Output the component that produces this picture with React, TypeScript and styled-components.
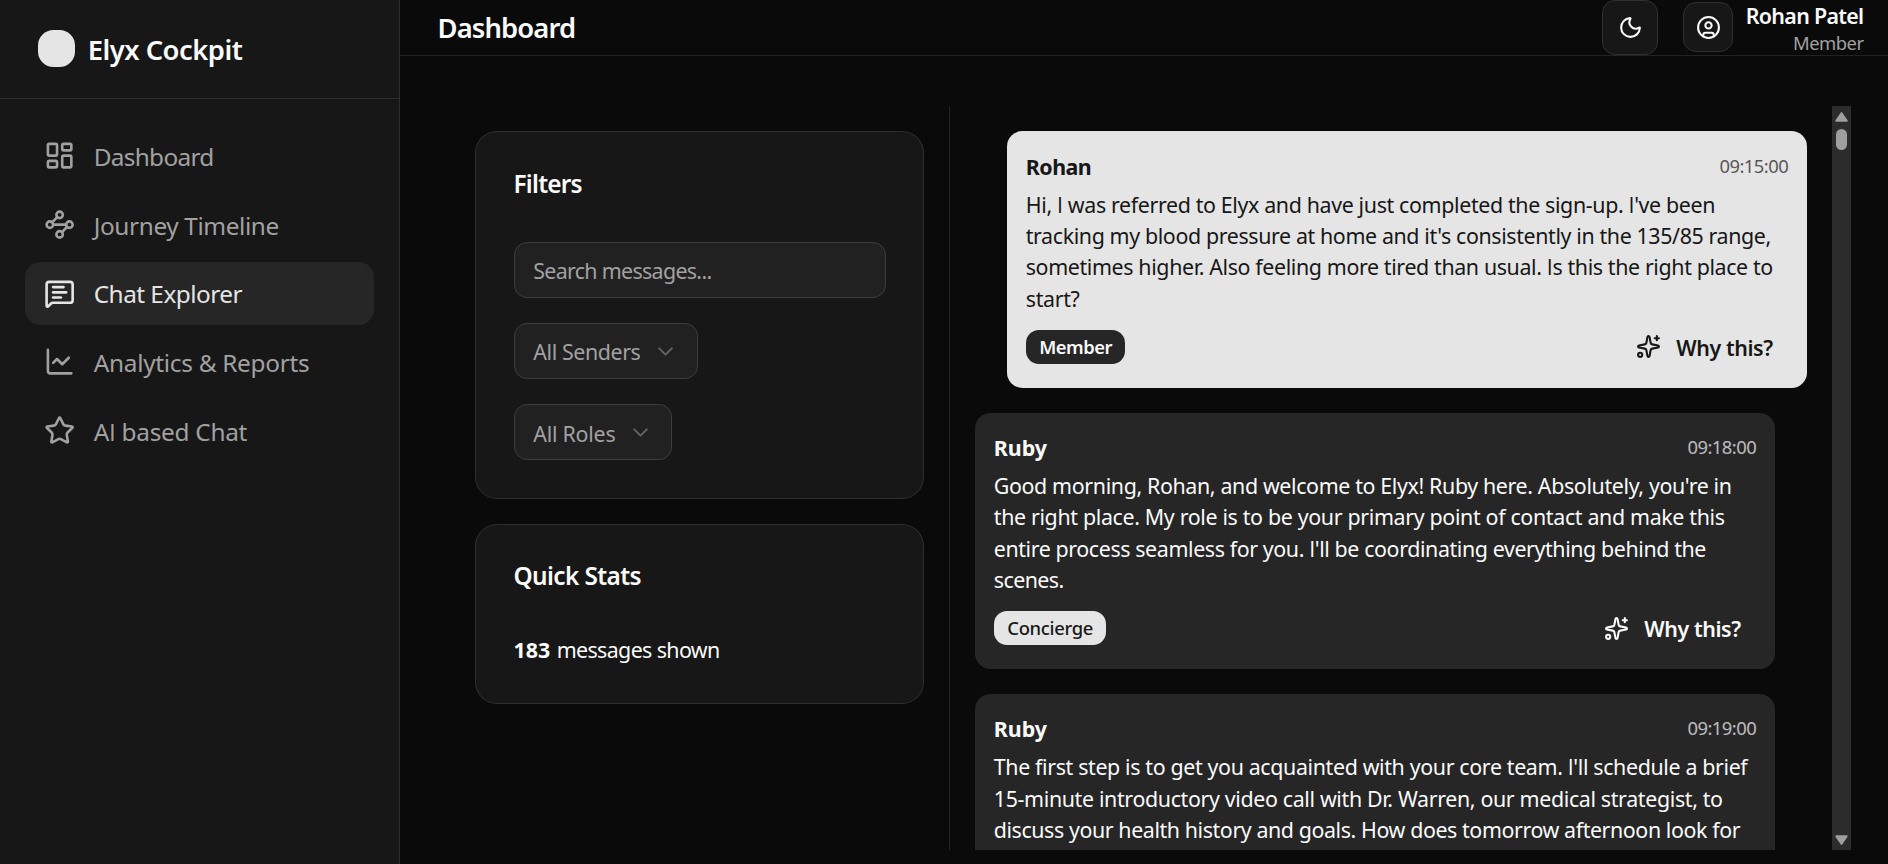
import React from 'react';
import styled, { createGlobalStyle, css } from 'styled-components';
import {
  ChartLine,
  ChevronDown,
  CircleUser,
  LayoutDashboard,
  MessageSquareText,
  Moon,
  Sparkles,
  Star,
  Waypoints,
} from 'lucide-react';

const colors = {
  background: '#0a0a0a',
  card: '#171717',
  accent: '#262626',
  light: '#e5e5e5',
  text: '#fafafa',
  muted: '#a1a1a1',
  border: 'rgba(255, 255, 255, 0.1)',
};

const GlobalStyle = createGlobalStyle`
  *, *::before, *::after { box-sizing: border-box; }
  body {
    margin: 0;
    overflow: hidden;
    background: ${colors.background};
    color: ${colors.text};
    font-family: "Noto Sans", sans-serif;
  }
`;

const Shell = styled.div`
  display: flex;
  width: 100vw;
  height: 100vh;
`;

/* ---------- sidebar ---------- */

const Sidebar = styled.aside`
  flex: 0 0 400px;
  background: ${colors.card};
  border-right: 1px solid ${colors.border};
`;

const Brand = styled.div`
  display: flex;
  align-items: center;
  gap: 12.75px;
  height: 99px;
  padding: 0 38px 1px;
  border-bottom: 1px solid ${colors.border};
`;

const BrandMark = styled.div`
  width: 37px;
  height: 37px;
  border-radius: 15.6px;
  background: ${colors.light};
`;

const Tracked = styled.span<{ $tracking: number }>`
  letter-spacing: ${(p) => p.$tracking}px;
`;

const BrandName = styled(Tracked)`
  padding-top: 2px;
  font-size: 27.4px;
  font-weight: 600;
  line-height: 36px;
`;

const Nav = styled.nav`
  display: flex;
  flex-direction: column;
  gap: 6.25px;
  padding: 25.5px 25px;
`;

const NavItem = styled.a<{ $active?: boolean }>`
  display: flex;
  align-items: center;
  gap: 18.75px;
  height: 62.5px;
  padding: 0 18.75px;
  border-radius: 15.6px;
  font-size: 24.4px;
  color: ${colors.muted};
  white-space: nowrap;
  ${(p) =>
    p.$active &&
    css`
      background: ${colors.accent};
      color: ${colors.light};
    `}
`;

const NavLabel = styled(Tracked)`
  padding-top: 2px;
  line-height: 32px;
`;

/* ---------- header ---------- */

const Main = styled.main`
  flex: 1;
  min-width: 0;
  display: flex;
  flex-direction: column;
`;

const Header = styled.header`
  display: flex;
  align-items: center;
  justify-content: space-between;
  flex: 0 0 56px;
  padding: 0 24.5px 0 37.5px;
  border-bottom: 1px solid ${colors.border};
`;

const PageTitle = styled.h1`
  margin: 0;
  font-size: 27.4px;
  font-weight: 600;
  line-height: 36px;
  letter-spacing: -0.88px;
`;

const HeaderActions = styled.div`
  display: flex;
  align-items: center;
`;

const IconButton = styled.button<{ $w: number; $h: number }>`
  display: flex;
  align-items: center;
  justify-content: center;
  width: ${(p) => p.$w}px;
  height: ${(p) => p.$h}px;
  padding: 0;
  border: 1px solid #303030;
  border-radius: 13px;
  background: ${colors.card};
  color: ${colors.text};
`;

const ProfileButton = styled(IconButton)`
  margin: 0 12.5px 1px 25px;
`;

const Identity = styled.div`
  display: flex;
  flex-direction: column;
  align-items: flex-end;
  height: 51px;
`;

const IdentityName = styled.span`
  font-size: 21.4px;
  font-weight: 600;
  line-height: 27px;
  letter-spacing: -0.68px;
`;

const IdentityRole = styled.span`
  font-size: 18.4px;
  line-height: 28px;
  letter-spacing: -0.5px;
  color: ${colors.muted};
`;

/* ---------- workspace ---------- */

const Workspace = styled.div`
  display: flex;
  height: 744px;
  margin: 50px 37px 14px 75px;
`;

const SideColumn = styled.section`
  display: flex;
  flex-direction: column;
  gap: 25px;
  flex: 0 0 475px;
  padding: 25.25px 25px 0 0;
  border-right: 1px solid ${colors.border};
`;

const Card = styled.div`
  padding: 37.5px;
  border: 1px solid ${colors.border};
  border-radius: 21.9px;
  background: ${colors.card};
`;

const CardTitle = styled.h2<{ $tracking: number }>`
  margin: 0 0 44.75px;
  padding-top: 1px;
  font-size: 24.4px;
  font-weight: 600;
  line-height: 26.5px;
  letter-spacing: ${(p) => p.$tracking}px;
`;

const Controls = styled.div`
  display: flex;
  flex-direction: column;
  align-items: flex-start;
  gap: 25px;
`;

const field = css`
  height: 56px;
  padding: 0 18.75px;
  border: 1px solid #3d3d3d;
  border-radius: 13px;
  background: #212121;
  color: ${colors.muted};
  font-family: inherit;
  font-size: 21.4px;
`;

const SearchInput = styled.input`
  ${field}
  width: 100%;
  padding-top: 1.5px;
  letter-spacing: -0.68px;
  outline: none;
  &::placeholder {
    color: ${colors.muted};
    opacity: 1;
  }
`;

const SelectTrigger = styled.button<{ $w: number }>`
  ${field}
  display: flex;
  align-items: center;
  gap: 12.5px;
  width: ${(p) => p.$w}px;
  white-space: nowrap;
  svg { flex: none; opacity: 0.5; }
`;

const SelectLabel = styled(Tracked)<{ $drop: number }>`
  padding-top: ${(p) => p.$drop}px;
  line-height: 30px;
`;

const StatLine = styled.p`
  margin: 0;
  padding-top: 1px;
  font-size: 21.4px;
  line-height: 30.25px;
  letter-spacing: -0.62px;
  strong { margin-right: 1.5px; letter-spacing: 0; font-weight: 700; }
`;

/* ---------- chat ---------- */

const Thread = styled.section`
  display: flex;
  flex-direction: column;
  gap: 25px;
  flex: 1;
  min-width: 0;
  padding: 25.25px 25px 0;
  overflow: hidden;
`;

const Bubble = styled.article<{ $own?: boolean }>`
  align-self: ${(p) => (p.$own ? 'flex-end' : 'flex-start')};
  flex: 0 0 256.25px;
  width: 800px;
  padding: 19.5px 18.75px 0;
  border-radius: 15.6px;
  background: ${(p) => (p.$own ? colors.light : colors.accent)};
  color: ${(p) => (p.$own ? colors.card : colors.text)};
`;

const BubbleHead = styled.div`
  display: flex;
  justify-content: space-between;
  margin-bottom: 6.75px;
  line-height: 31.25px;
`;

const Sender = styled(Tracked)`
  font-size: 21.4px;
  font-weight: 700;
`;

const Time = styled.time`
  font-size: 18.4px;
  line-height: 29.5px;
  letter-spacing: -0.52px;
  opacity: 0.7;
`;

const Line = styled(Tracked)`
  display: block;
  height: 31.25px;
  font-size: 21.4px;
  line-height: 31.25px;
  white-space: nowrap;
`;

const BubbleFoot = styled.div`
  display: flex;
  align-items: center;
  justify-content: space-between;
  height: 50px;
  margin-top: 8px;
`;

const Badge = styled.span<{ $own?: boolean }>`
  height: 33.5px;
  padding: 0 13px 0 13.5px;
  border-radius: 13px;
  background: ${(p) => (p.$own ? colors.accent : colors.light)};
  color: ${(p) => (p.$own ? colors.text : colors.card)};
  font-size: 18.4px;
  font-weight: ${(p) => (p.$own ? 600 : 500)};
  line-height: 33.5px;
  letter-spacing: ${(p) => (p.$own ? -0.5 : -0.3)}px;
`;

const WhyButton = styled.button`
  display: flex;
  align-items: center;
  gap: 15.6px;
  padding: 0 15.6px 0 0;
  border: 0;
  background: none;
  color: inherit;
  font-family: inherit;
  font-size: 21.4px;
  font-weight: 600;
  line-height: 32px;
  letter-spacing: -0.42px;
  span { padding-top: 2px; }
`;

/* Capital I is set in a face that draws it without serifs. */
const PlainI = styled.span`
  font-family: "Open Sans", sans-serif;
  line-height: 0;
`;

function Sans({ text }: { text: string }) {
  return (
    <>
      {text.split('I').map((part, i) => (
        <React.Fragment key={i}>
          {i > 0 && <PlainI>I</PlainI>}
          {part}
        </React.Fragment>
      ))}
    </>
  );
}

/* ---------- scrollbar ---------- */

const Scrollbar = styled.div`
  display: flex;
  flex-direction: column;
  align-items: center;
  flex: 0 0 19px;
  padding: 6px 0 5px;
  background: #2c2c2c;
  color: #9f9f9f;
`;

const Thumb = styled.div`
  width: 11px;
  height: 21px;
  margin: 7px 0 auto;
  border-radius: 5.5px;
  background: #9f9f9f;
`;

const Arrow = ({ down }: { down?: boolean }) => (
  <svg width="13" height="10" viewBox="0 0 13 10" fill="currentColor">
    <path
      d="M5.6.7a1.1 1.1 0 0 1 1.8 0l5 7.3a1 1 0 0 1-.8 1.7H1.4A1 1 0 0 1 .6 8z"
      transform={down ? 'rotate(180 6.5 5)' : undefined}
    />
  </svg>
);

/* ---------- data ---------- */

const navItems = [
  { label: 'Dashboard', icon: LayoutDashboard, tracking: -0.72 },
  { label: 'Journey Timeline', icon: Waypoints, tracking: -0.4 },
  { label: 'Chat Explorer', icon: MessageSquareText, tracking: -0.54, active: true },
  { label: 'Analytics & Reports', icon: ChartLine, tracking: -0.3 },
  { label: 'AI based Chat', icon: Star, tracking: -0.3 },
];

type Message = {
  sender: string;
  time: string;
  tracking: number;
  role?: string;
  own?: boolean;
  lines: [string, number][];
};

const messages: Message[] = [
  {
    sender: 'Rohan',
    role: 'Member',
    time: '09:15:00',
    tracking: -0.5,
    own: true,
    lines: [
      ["Hi, I was referred to Elyx and have just completed the sign-up. I've been", -0.36],
      ["tracking my blood pressure at home and it's consistently in the 135/85 range,", -0.38],
      ['sometimes higher. Also feeling more tired than usual. Is this the right place to', -0.375],
      ['start?', -0.35],
    ],
  },
  {
    sender: 'Ruby',
    role: 'Concierge',
    time: '09:18:00',
    tracking: 0,
    lines: [
      ["Good morning, Rohan, and welcome to Elyx! Ruby here. Absolutely, you're in", -0.365],
      ['the right place. My role is to be your primary point of contact and make this', -0.342],
      ["entire process seamless for you. I'll be coordinating everything behind the", -0.395],
      ['scenes.', -0.55],
    ],
  },
  {
    sender: 'Ruby',
    time: '09:19:00',
    tracking: 0,
    lines: [
      ["The first step is to get you acquainted with your core team. I'll schedule a brief", -0.36],
      ['15-minute introductory video call with Dr. Warren, our medical strategist, to', -0.35],
      ['discuss your health history and goals. How does tomorrow afternoon look for', -0.41],
    ],
  },
];

export default function App() {
  return (
    <Shell>
      <GlobalStyle />
      <Sidebar>
        <Brand>
          <BrandMark />
          <BrandName $tracking={-0.52}>Elyx Cockpit</BrandName>
        </Brand>
        <Nav>
          {navItems.map(({ label, icon: Icon, tracking, active }) => (
            <NavItem key={label} $active={active}>
              <Icon size={31.25} />
              <NavLabel $tracking={tracking}>
                <Sans text={label} />
              </NavLabel>
            </NavItem>
          ))}
        </Nav>
      </Sidebar>

      <Main>
        <Header>
          <PageTitle>Dashboard</PageTitle>
          <HeaderActions>
            <IconButton $w={56} $h={55}>
              <Moon size={25} />
            </IconButton>
            <ProfileButton $w={50} $h={50}>
              <CircleUser size={25} />
            </ProfileButton>
            <Identity>
              <IdentityName>Rohan Patel</IdentityName>
              <IdentityRole>Member</IdentityRole>
            </Identity>
          </HeaderActions>
        </Header>

        <Workspace>
          <SideColumn>
            <Card>
              <CardTitle $tracking={-0.76}>Filters</CardTitle>
              <Controls>
                <SearchInput placeholder="Search messages..." />
                <SelectTrigger $w={184}>
                  <SelectLabel $tracking={-0.4} $drop={2}>All Senders</SelectLabel>
                  <ChevronDown size={25} />
                </SelectTrigger>
                <SelectTrigger $w={158}>
                  <SelectLabel $tracking={-0.24} $drop={4}>All Roles</SelectLabel>
                  <ChevronDown size={25} />
                </SelectTrigger>
              </Controls>
            </Card>
            <Card>
              <CardTitle $tracking={-0.6}>Quick Stats</CardTitle>
              <StatLine>
                <strong>183</strong> messages shown
              </StatLine>
            </Card>
          </SideColumn>

          <Thread>
            {messages.map((m) => (
              <Bubble key={m.time} $own={m.own}>
                <BubbleHead>
                  <Sender $tracking={m.tracking}>{m.sender}</Sender>
                  <Time>{m.time}</Time>
                </BubbleHead>
                {m.lines.map(([text, tracking]) => (
                  <Line key={text} $tracking={tracking}>
                    <Sans text={text} />
                  </Line>
                ))}
                {m.role && (
                  <BubbleFoot>
                    <Badge $own={m.own}>{m.role}</Badge>
                    <WhyButton>
                      <Sparkles size={25} />
                      <span>Why this?</span>
                    </WhyButton>
                  </BubbleFoot>
                )}
              </Bubble>
            ))}
          </Thread>

          <Scrollbar>
            <Arrow />
            <Thumb />
            <Arrow down />
          </Scrollbar>
        </Workspace>
      </Main>
    </Shell>
  );
}
